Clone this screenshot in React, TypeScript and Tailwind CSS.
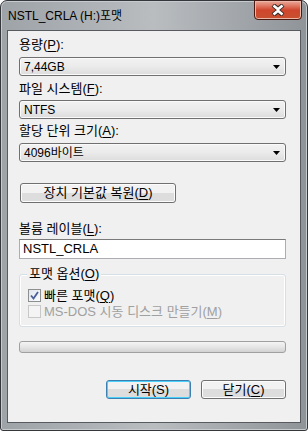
const font = "font-['Liberation_Sans','Noto_Sans_CJK_KR',sans-serif]"

function Combo({ value }: { value: string }) {
  return (
    <div className="h-[19px] w-[267px] rounded-[3px] border border-[#707070] bg-gradient-to-b from-[#f2f2f2] via-[#ebebeb] to-[#dcdcdc] flex items-center pl-[4px] pr-[5px] text-[12px] text-black shadow-[inset_0_0_0_1px_#fafafa]">
      <span className="flex-1 leading-none">{value}</span>
      <svg width="7" height="4" viewBox="0 0 7 4">
        <path d="M0 0H7L3.5 4Z" fill="#000" />
      </svg>
    </div>
  )
}

function Button({
  children,
  className = "",
  focused = false,
}: {
  children: React.ReactNode
  className?: string
  focused?: boolean
}) {
  return (
    <div
      className={`rounded-[3px] border ${
        focused ? "border-[#3c7fb1] shadow-[inset_0_0_0_1px_#48d0fb]" : "border-[#707070] shadow-[inset_0_0_0_1px_#fcfcfc]"
      } bg-gradient-to-b from-[#f2f2f2] from-50% to-[#dddddd] to-50% flex items-center justify-center text-[13px] text-black ${className}`}
    >
      {children}
    </div>
  )
}

function U({ children }: { children: React.ReactNode }) {
  return <span className="underline underline-offset-[2px]">{children}</span>
}

export default function App() {
  return (
    <div className={`w-[308px] h-[431px] bg-white ${font}`}>
      <div className="w-full h-full rounded-t-[7px] rounded-b-[3px] border border-[#34383c] bg-gradient-to-r from-[#9ea3a8] via-[#b9bdc0] to-[#8f9499] flex flex-col shadow-[inset_0_0_0_1px_#c8cbce]">
        <div className="relative h-[29px] shrink-0 flex items-center pl-[7px] pt-[1px]">
          <span className="text-[12px] text-black">NSTL_CRLA (H:)포맷</span>
          <div className="absolute right-[5px] top-[-1px] w-[48px] h-[20px] rounded-b-[4px] border border-[#4b1a12] bg-gradient-to-b from-[#e9a99b] via-[#d0462e] to-[#c7502f] flex items-center justify-center shadow-[inset_0_0_0_1px_#ebb7a9]">
            <svg width="14" height="12" viewBox="0 0 14 12">
              <path d="M2 1L7 5L12 1M2 11L7 7L12 11" stroke="#3a2a26" strokeWidth="4.5" fill="none" />
              <path d="M2.5 1.5L7 5.2L11.5 1.5M2.5 10.5L7 6.8L11.5 10.5" stroke="#fff" strokeWidth="2.6" fill="none" />
            </svg>
          </div>
        </div>
        <div className="mx-[6px] mb-[7px] flex-1 border border-[#575b60] bg-[#f0f0f0] px-[11px] flex flex-col text-[13px] text-black">
          <div className="mt-[6px] h-[15px] leading-[15px]">
            용량(<U>P</U>):
          </div>
          <div className="mt-[5px]">
            <Combo value="7,44GB" />
          </div>
          <div className="mt-[5px] h-[15px] leading-[15px]">
            파일 시스템(<U>F</U>):
          </div>
          <div className="mt-[4px]">
            <Combo value="NTFS" />
          </div>
          <div className="mt-[4px] h-[15px] leading-[15px]">
            할당 단위 크기(<U>A</U>):
          </div>
          <div className="mt-[5px]">
            <Combo value="4096바이트" />
          </div>
          <div className="mt-[21px]">
            <Button className="w-[156px] h-[20px] ml-[1px]">
              장치 기본값 복원(<U>D</U>)
            </Button>
          </div>
          <div className="mt-[18px] h-[15px] leading-[15px]">
            볼륨 레이블(<U>L</U>):
          </div>
          <div className="mt-[3px] h-[20px] w-[267px] border border-[#abadb3] border-t-[#7a7a7a] bg-white flex items-center pl-[3px]">
            NSTL_CRLA
          </div>
          <div className="relative mt-[15px] h-[53px] w-[267px] rounded-[3px] border border-[#d5dfe5] shadow-[inset_0_0_0_1px_#fff]">
            <div className="absolute left-[7px] top-[-9px] bg-[#f0f0f0] px-[2px] leading-[15px]">
              포맷 옵션(<U>O</U>)
            </div>
            <div className="mt-[13px] ml-[8px] flex items-center gap-[3px] h-[15px]">
              <div className="w-[13px] h-[13px] border border-[#8e8f8f] bg-gradient-to-br from-[#dfe6ef] to-[#fafcff] flex items-center justify-center">
                <svg width="9" height="9" viewBox="0 0 9 9">
                  <path d="M1 4.5L3.5 7.5L8 1" stroke="#4a5f97" strokeWidth="1.8" fill="none" />
                </svg>
              </div>
              <span>
                빠른 포맷(<U>Q</U>)
              </span>
            </div>
            <div className="mt-[1px] ml-[8px] flex items-center gap-[3px] h-[15px] text-[#a0a0a0]">
              <div className="w-[13px] h-[13px] border border-[#c8c8c8] bg-[#f4f4f4]" />
              <span>
                MS-DOS 시동 디스크 만들기(<U>M</U>)
              </span>
            </div>
          </div>
          <div className="mt-[14px] h-[12px] w-[267px] rounded-[3px] border border-[#a0a0a0] bg-gradient-to-b from-[#f4f4f4] via-[#e6e6e6] to-[#d2d2d2]" />
          <div className="mt-[27px] flex justify-end gap-[10px] w-[267px]">
            <Button focused className="w-[85px] h-[19px]">
              시작(S)
            </Button>
            <Button className="w-[85px] h-[19px]">
              닫기(<U>C</U>)
            </Button>
          </div>
        </div>
      </div>
    </div>
  )
}
